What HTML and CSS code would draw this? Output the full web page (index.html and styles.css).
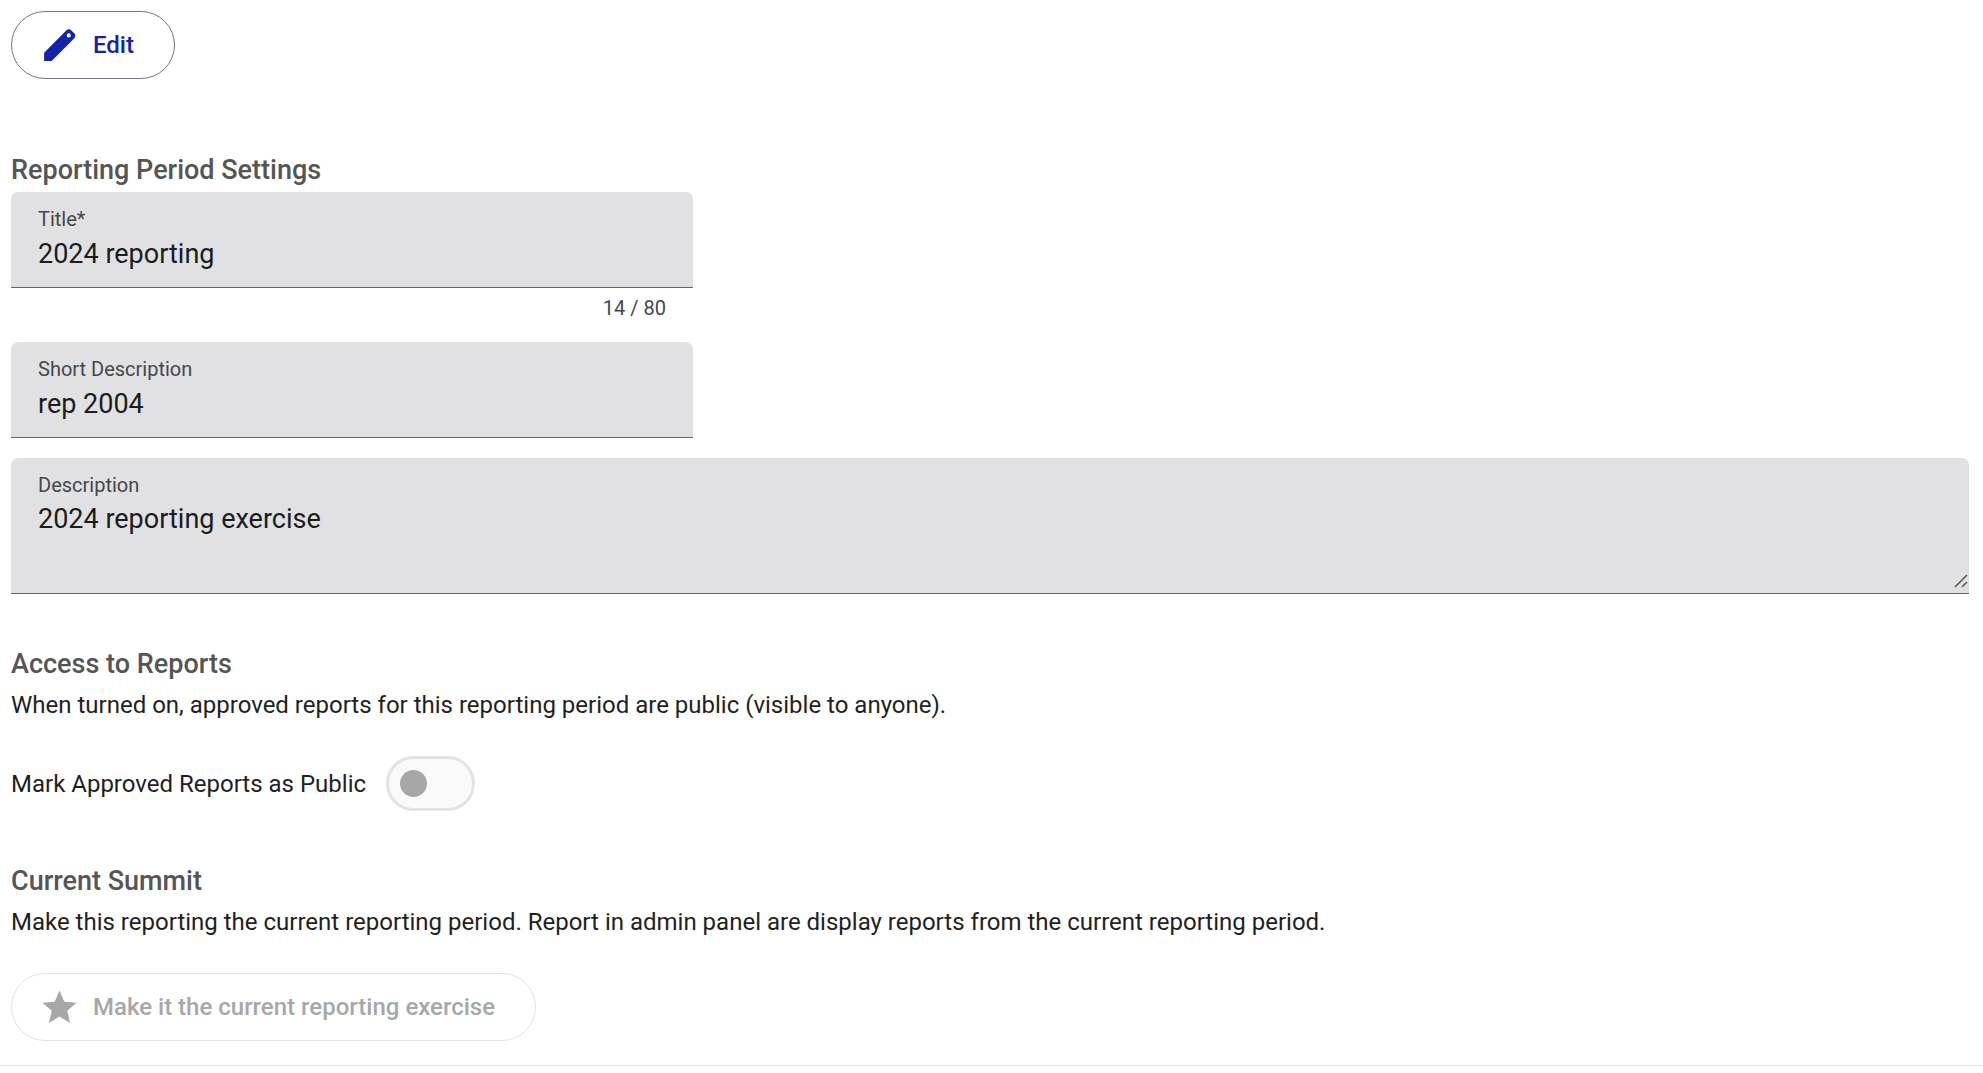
FILE: index.html
```html
<!DOCTYPE html>
<html lang="en">
<head>
    <meta charset="UTF-8">
    <meta name="viewport" content="width=device-width, initial-scale=1.0">
    <title>Reporting Period Settings</title>
    <link rel="stylesheet" href="styles.css">
</head>
<body>

    <main class="page">

        <button class="btn" type="button">
            <svg class="btn-icon" viewBox="0 0 24 24" aria-hidden="true">
                <path fill-rule="evenodd" d="M3 16.3V21h4.4L20.4 8c1.1-1.1 1.1-2.3.1-3.3l-1.4-1.4c-1-1-2.3-1-3.3 0zM17.4 4.9a1.2 1.2 0 1 1 0 2.4a1.2 1.2 0 0 1 0-2.4z"/>
            </svg>
            Edit
        </button>

        <form class="settings">

            <section class="section">
                <h2>Reporting Period Settings</h2>

                <div class="fields">
                    <div class="field-group">
                        <div class="field">
                            <label for="title">Title*</label>
                            <input type="text" id="title" value="2024 reporting" maxlength="80" readonly>
                        </div>
                        <span class="counter">14 / 80</span>
                    </div>

                    <div class="field-group">
                        <div class="field">
                            <label for="shortdescription">Short Description</label>
                            <input type="text" id="shortdescription" value="rep 2004" readonly>
                        </div>
                    </div>

                    <div class="field">
                        <label for="description">Description</label>
                        <textarea id="description" readonly>2024 reporting exercise</textarea>
                        <svg class="grip" viewBox="0 0 14 14" aria-hidden="true">
                            <path d="M1 13L13 1M8 13l5-5"/>
                        </svg>
                    </div>
                </div>
            </section>

            <section class="section">
                <h2>Access to Reports</h2>
                <p>When turned on, approved reports for this reporting period are public (visible to anyone).</p>

                <div class="toggle">
                    <label for="public">Mark Approved Reports as Public</label>
                    <input class="switch" type="checkbox" role="switch" id="public" disabled>
                </div>
            </section>

            <section class="section">
                <h2>Current Summit</h2>
                <p>Make this reporting the current reporting period. Report in admin panel are display reports from the current reporting period.</p>

                <button class="btn" type="button" disabled>
                    <svg class="btn-icon" viewBox="0 0 24 24" aria-hidden="true">
                        <path d="M12 17.27L18.18 21l-1.64-7.03L22 9.24l-7.19-.61L12 2 9.19 8.63 2 9.24l5.46 4.73L5.82 21z"/>
                    </svg>
                    Make it the current reporting exercise
                </button>
            </section>

        </form>

    </main>

    <hr class="divider">

</body>
</html>
```

FILE: styles.css
```css
* {
    box-sizing: border-box;
    margin: 0;
}

body {
    font-family: Roboto, sans-serif;
    font-size: 24px;
    line-height: 34px;
    color: #1f1f1f;
    background-color: #fff;
}

.page {
    padding: 11px 14px 24px 11px;
}

h2 {
    font-size: 27px;
    line-height: 40px;
    font-weight: 500;
    color: #555;
}

p {
    margin-top: 4px;
}

input,
textarea {
    font-family: inherit;
    font-size: 27px;
    line-height: 40px;
    color: #1a1c1e;
}

/* buttons */

.btn {
    display: inline-flex;
    align-items: center;
    gap: 13px;
    height: 68px;
    padding: 0 40px 0 27px;
    font-family: inherit;
    font-size: 24px;
    font-weight: 500;
    color: #1423a8;
    background-color: transparent;
    border: 1px solid #74777f;
    border-radius: 34px;
    cursor: pointer;
}

.btn:disabled {
    color: #a6a8a7;
    border-color: #e3e3e3;
    cursor: default;
}

.btn-icon {
    width: 41px;
    height: 41px;
    fill: currentColor;
}

/* form */

.settings {
    display: flex;
    flex-direction: column;
    gap: 50px;
    margin-top: 71px;
}

.section {
    display: flex;
    flex-direction: column;
    align-items: flex-start;
}

.fields {
    display: flex;
    flex-direction: column;
    gap: 20px;
    width: 100%;
    margin-top: 2px;
}

.field-group {
    display: flex;
    flex-direction: column;
    width: 682px;
    max-width: 100%;
}

.field {
    position: relative;
    display: flex;
    flex-direction: column;
    background-color: #e1e1e3;
    border-bottom: 1px solid #63666d;
    border-radius: 7px 7px 0 0;
    overflow: hidden;
}

.field label {
    padding: 14px 27px 0;
    font-size: 20px;
    line-height: 27px;
    color: #44474e;
}

.field input,
.field textarea {
    width: 100%;
    padding: 0 27px;
    background-color: transparent;
    border: none;
    outline: none;
}

.field input {
    height: 54px;
    padding-bottom: 13px;
}

.field textarea {
    display: block;
    height: 94px;
    resize: vertical;
}

.field textarea::-webkit-resizer {
    background: transparent;
}

/* sits over the textarea's resize corner */
.grip {
    position: absolute;
    right: 1px;
    bottom: 5px;
    width: 14px;
    height: 14px;
    fill: none;
    stroke: #555;
    stroke-width: 1.5;
    pointer-events: none;
}

.counter {
    align-self: flex-end;
    height: 34px;
    padding: 3px 27px 0;
    font-size: 20px;
    color: #44474e;
}

/* switch */

.toggle {
    display: flex;
    align-items: center;
    gap: 20px;
    margin-top: 34px;
}

.switch {
    appearance: none;
    display: flex;
    align-items: center;
    width: 89px;
    height: 55px;
    padding: 0 11px;
    background-color: #fafafa;
    border: 3px solid #e3e3e3;
    border-radius: 28px;
}

.switch::before {
    content: "";
    width: 27px;
    height: 27px;
    background-color: #a6a8a7;
    border-radius: 50%;
}

.switch:checked {
    justify-content: flex-end;
}

.section > .btn {
    margin-top: 34px;
}

.divider {
    border: none;
    border-top: 1px solid #e3e3e3;
}
```
